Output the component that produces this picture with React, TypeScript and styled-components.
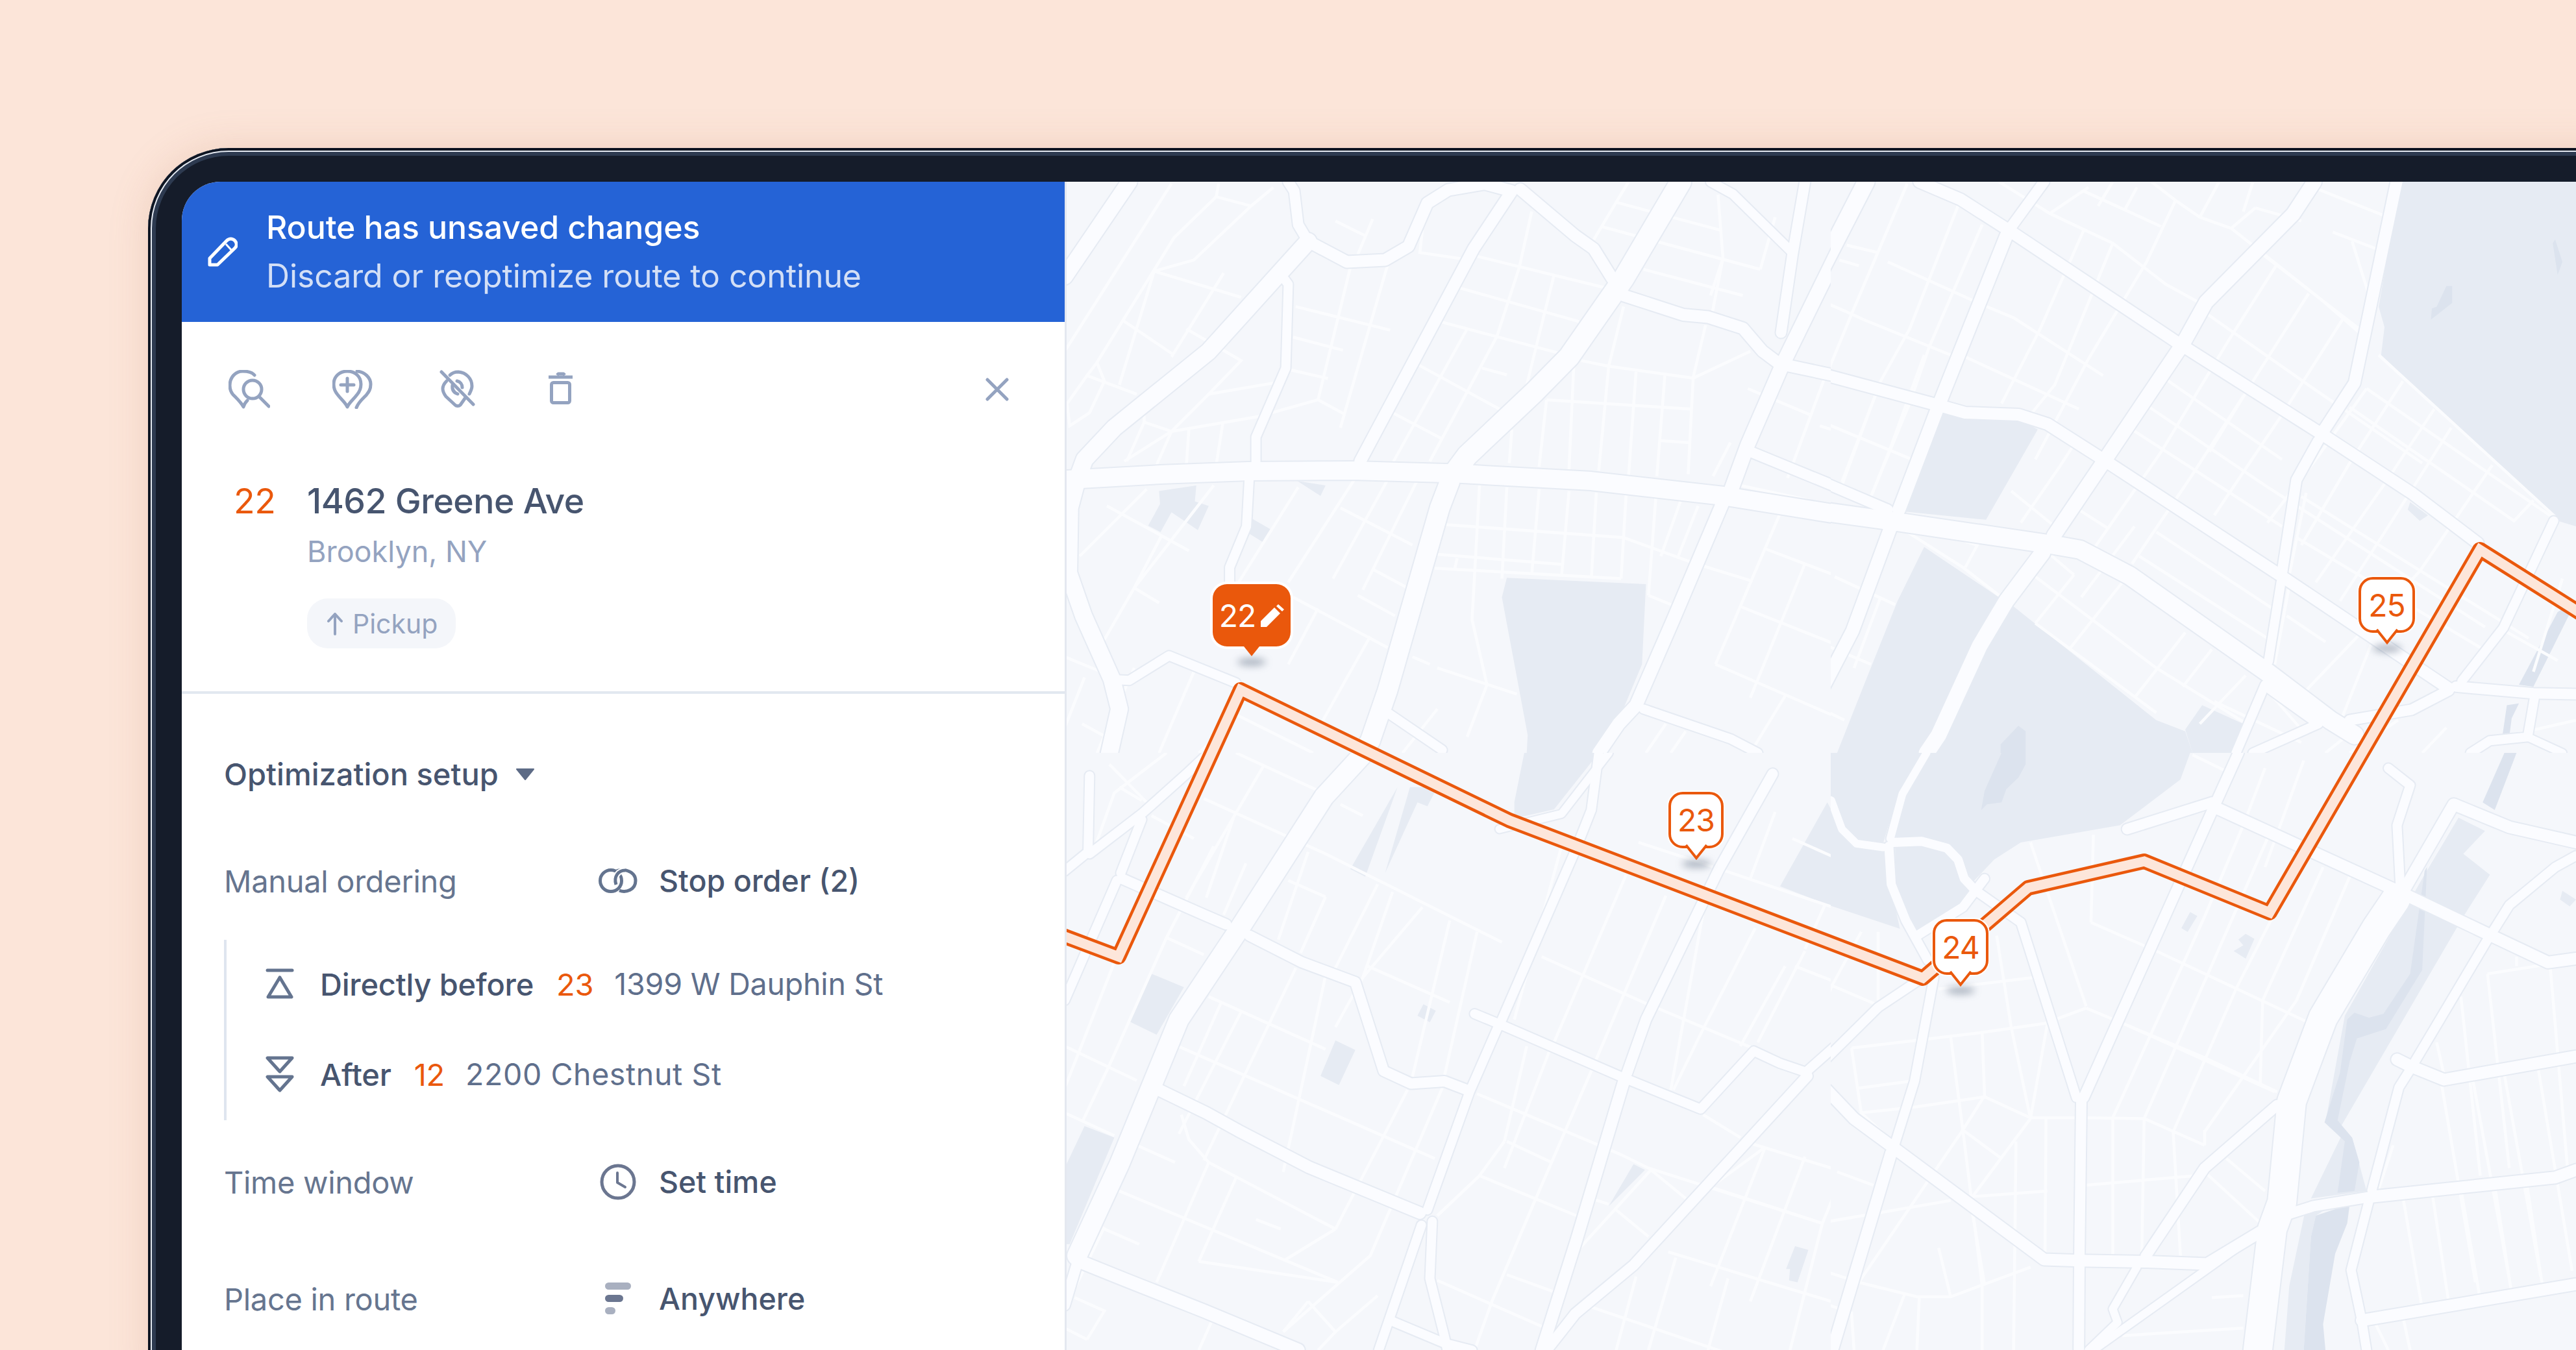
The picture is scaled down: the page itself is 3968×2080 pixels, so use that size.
import React from "react";
import styled, { createGlobalStyle } from "styled-components";

const ORANGE = "#ea580c";

const GlobalStyle = createGlobalStyle`
  html, body {
    margin: 0;
    padding: 0;
    background: #fce5d9;
    font-family: Inter, "Noto Sans", "Liberation Sans", sans-serif;
  }
`;

const Page = styled.div`
  width: 3968px;
  height: 2080px;
  padding: 228px 0 0 228px;
  box-sizing: border-box;
  overflow: hidden;
  background: #fce5d9;
`;

const Frame = styled.div`
  width: 3800px;
  height: 1900px;
  padding: 52px 0 0 52px;
  box-sizing: border-box;
  background: #151c2a;
  border-radius: 124px 0 0 0;
  box-shadow: 0 0 60px rgba(190, 130, 100, 0.22), inset 0 0 0 4px #0e1522,
    inset 0 0 0 6px #e4e9f1, inset 0 0 0 12px #2d3a50;
`;

const Screen = styled.div`
  display: flex;
  width: 3688px;
  height: 1800px;
  overflow: hidden;
  border-radius: 60px 0 0 0;
`;

const Panel = styled.aside`
  flex: 0 0 1363px;
  box-sizing: border-box;
  background: #fff;
  border-right: 3px solid #e4e8f0;
`;

const Banner = styled.div`
  display: flex;
  align-items: center;
  gap: 44px;
  height: 216px;
  padding-left: 40px;
  background: #2563d6;
`;

const BannerLines = styled.div`
  display: flex;
  flex-direction: column;
  letter-spacing: -0.1px;
`;

const BannerTitle = styled.div`
  font-size: 50px;
  line-height: 75px;
  font-weight: 500;
  color: #fff;
`;

const BannerText = styled.div`
  font-size: 50px;
  line-height: 75px;
  font-weight: 400;
  color: #d3dff6;
`;

const Toolbar = styled.div`
  display: flex;
  align-items: center;
  height: 208px;
  padding: 0 86px 0 72px;
`;

const ToolIcon = styled.svg<{ $last?: boolean }>`
  display: block;
  width: 64px;
  height: 60px;
  margin-right: ${(p) => (p.$last ? 0 : 96)}px;
  fill: none;
  stroke: #94a3c0;
  stroke-width: 5;
  stroke-linecap: round;
  stroke-linejoin: round;
`;

const CloseIcon = styled.svg`
  display: block;
  width: 36px;
  height: 36px;
  margin-left: auto;
  fill: none;
  stroke: #94a3c0;
  stroke-width: 5;
  stroke-linecap: round;
`;

const Stop = styled.div`
  padding: 34px 0 66px 80px;
  border-bottom: 4px solid #e2e8f0;
`;

const StopHead = styled.div`
  display: flex;
  font-size: 53.5px;
  line-height: 68px;
  font-weight: 500;
  letter-spacing: -0.5px;
  color: #47556f;
`;

const StopNumber = styled.span`
  width: 113px;
  font-weight: 400;
  color: ${ORANGE};
`;

const StopCity = styled.div`
  margin: 10px 0 0 113px;
  font-size: 45px;
  line-height: 68px;
  color: #94a3c0;
`;

const Pill = styled.div`
  display: inline-flex;
  align-items: center;
  gap: 14px;
  height: 77px;
  margin: 38px 0 0 113px;
  padding: 0 28px 0 30px;
  box-sizing: border-box;
  border-radius: 32px;
  background: #f4f6fa;
  font-size: 41px;
  color: #94a3c0;
`;

const Setup = styled.section`
  padding: 94px 0 0 65px;
`;

const SetupTitle = styled.div`
  display: flex;
  align-items: center;
  gap: 26px;
  font-size: 47px;
  line-height: 60px;
  font-weight: 500;
  color: #47556f;
`;

const Row = styled.div<{ $top: number }>`
  display: flex;
  align-items: center;
  height: 60px;
  margin-top: ${(p) => p.$top}px;
`;

const RowLabel = styled.div`
  width: 577px;
  font-size: 47px;
  letter-spacing: -0.3px;
  color: #66758f;
`;

const RowIcon = styled.div`
  display: flex;
  justify-content: center;
  width: 60px;
  margin-right: 33px;
`;

const RowValue = styled.div`
  font-size: 46.5px;
  font-weight: 500;
  color: #47556f;
`;

const Ordering = styled.div`
  display: flex;
  flex-direction: column;
  gap: 79px;
  height: 278px;
  margin-top: 61px;
  padding: 38px 0 0 60px;
  box-sizing: border-box;
  border-left: 4px solid #dfe5ef;
`;

const OrderItem = styled.div`
  display: flex;
  align-items: center;
  height: 60px;
  font-size: 47px;
  letter-spacing: -0.2px;
`;

const OrderIcon = styled.div`
  flex: 0 0 44px;
  margin-right: 40px;
  display: flex;
`;

const OrderKind = styled.span`
  font-weight: 500;
  color: #47556f;
`;

const OrderNumber = styled.span`
  margin: 0 32px 0 35px;
  color: ${ORANGE};
`;

const OrderAddress = styled.span<{ $spacing: number }>`
  font-size: 46.5px;
  letter-spacing: ${(p) => p.$spacing}px;
  color: #5f6f8c;
`;

const MapPane = styled.div`
  position: relative;
  flex: 1;
  overflow: hidden;
  background: #f5f7fb;
`;

const MapDrawing = styled.svg`
  display: block;
  width: 100%;
  height: 100%;
`;

const PinBox = styled.div<{ $x: number; $y: number; $w: number; $h: number }>`
  position: absolute;
  left: ${(p) => p.$x - 1643}px;
  top: ${(p) => p.$y - 280}px;
  width: ${(p) => p.$w}px;
  height: ${(p) => p.$h}px;
`;

const PinBubble = styled.div<{ $solid?: boolean }>`
  position: relative;
  z-index: 1;
  display: flex;
  align-items: center;
  justify-content: center;
  gap: 8px;
  height: 100%;
  box-sizing: border-box;
  font-size: 48px;
  letter-spacing: -1px;
  border-radius: 22px;
  color: ${(p) => (p.$solid ? "#fff" : ORANGE)};
  background: ${(p) => (p.$solid ? ORANGE : "#fff")};
  border: ${(p) => (p.$solid ? "none" : `4px solid ${ORANGE}`)};
  box-shadow: 0 0 0 ${(p) => (p.$solid ? 4 : 2)}px #fff;
`;

const PinTail = styled.svg`
  position: absolute;
  z-index: 2;
  left: 50%;
  top: 100%;
  width: 36px;
  height: 22px;
  margin: -5px 0 0 -18px;
  overflow: visible;
`;

const PinShadow = styled.div`
  position: absolute;
  left: 50%;
  top: 100%;
  width: 44px;
  height: 12px;
  margin: 18px 0 0 -22px;
  border-radius: 50%;
  background: rgba(70, 85, 110, 0.42);
  filter: blur(6px);
`;

type Road = [number, string];
type Quad = {
  ox: number;
  oy: number;
  sx: number;
  sy: number;
  clip: [number, number, number, number];
  parks: string[];
  water: string[];
  streets: string[];
  roads: Road[];
};

const QUADS: Quad[] = [
  {
    ox: 1640, oy: 260, sx: 1.3067, sy: 1.742,
    clip: [1640, 280, 2820, 1160],
    parks: [
      "190,865 265,850 262,893 290,905 268,970 215,922 193,975 168,958 192,900",
      "378,940 415,968 400,1003 372,980",
      "890,1098 1170,1115 1162,1330 1115,1480 1075,1568 930,1568 932,1520 880,1150",
      "468,838 525,850 515,878",
    ],
    water: [],
    streets: [
      "215,40 0,490", "310,40 305,75 220,185 65,520 45,555 5,630 10,690 50,655 80,570 65,520",
      "305,75 375,100", "420,50 375,100 260,245 180,275 110,580", "180,275 355,345", "115,405 220,500",
      "320,280 215,505", "245,430 355,515 290,605 215,705 120,785", "45,555 145,605", "290,605 420,575",
      "215,705 390,665 510,620 565,660", "160,650 160,680 125,785", "160,680 215,705", "250,700 245,795",
      "318,685 305,795", "215,705 185,795", "465,370 655,433", "460,452 560,487", "455,540 530,563",
      "650,258 555,695", "575,265 510,620", "545,140 605,180", "620,135 590,230", "720,165 715,225 815,245",
      "830,235 1090,320", "795,320 1035,410", "755,410 995,495", "985,285 930,580", "940,115 915,265 870,450 735,785",
      "810,430 660,790", "710,525 875,645", "660,655 760,725", "840,535 890,553", "900,700 895,790",
      "1125,370 1095,530 1075,810", "970,620 1260,645", "1040,515 1095,530 1265,562 1380,490", "1265,562 1255,820",
      "1150,545 1135,825", "1208,555 1192,825", "1025,520 1015,810", "970,620 955,800", "1200,730 1258,735",
      "1290,420 1265,560", "1315,70 1325,240 1300,340", "1065,190 1110,90 1135,35", "1110,90 1320,165",
      "1080,155 1400,270", "1400,270 1430,130", "1325,240 1300,410", "1165,270 1365,340",
      "835,850 825,1090 820,1210 850,1385", "890,855 880,1100", "955,860 940,1090", "1015,865 1000,1095",
      "1070,870 1060,1100", "1130,875 1120,1100", "1190,880 1175,1145", "765,955 1125,990 1270,1060 1380,1105",
      "750,1035 1000,1062", "745,1072 1120,1100", "790,1045 785,1075", "165,860 30,1040", "85,905 250,1025",
      "300,850 140,1125 60,1310", "140,1125 190,1165", "195,985 140,1125", "470,855 350,1110", "555,910 700,1010",
      "585,830 450,1110", "650,835 540,1100", "710,835 600,1130", "620,1075 690,1125", "590,1145 665,1200",
      "460,1150 650,1285", "510,1180 450,1330", "615,1255 520,1480", "750,1340 910,1410", "700,1310 735,1330",
      "850,1385 810,1525", "1175,1145 1230,1175", "1360,1175 1568,1285", "1410,1020 1568,1100",
      "1490,1060 1380,1420", "1310,1330 1568,1480", "1450,1415 1380,1568", "1440,925 1310,1330",
      "1240,890 1200,1040", "1275,905 1235,1040", "1360,850 1500,890", "1530,560 1455,830", "1375,590 1500,660",
      "1340,735 1305,825", "1520,690 1568,710", "750,1450 680,1568", "0,1310 110,1370", "40,1365 0,1500", "35,1490 90,1530",
      "340,1480 270,1568", "260,1350 190,1568", "345,1465 500,1568", "140,1340 65,1568", "1210,1490 1170,1568", "1250,1510 1220,1568",
    ],
    roads: [
      [24, "130,35 0,290"],
      [26, "490,195 290,490 100,695 40,780 25,835 10,910 8,1085 38,1200 95,1370 110,1450 90,1568"],
      [16, "450,35 462,60 470,150 490,195"],
      [18, "490,195 568,250 645,245 692,208 730,92 772,57 845,40 900,60 823,215 595,785"],
      [18, "917,55 1028,180 1065,215 1100,290 1115,320"],
      [32, "1240,35 1125,295 1015,505 945,600 810,770 785,815"],
      [30, "775,840 755,910 650,1400 615,1535 600,1568"],
      [28, "0,835 200,820 370,812 580,810 790,818 1060,838 1325,878 1568,930"],
      [14, "372,815 366,960 332,1070 332,1120"],
      [14, "385,800 385,720 445,535 450,310 440,292"],
      [14, "110,1372 130,1373 210,1307 345,1380"],
      [18, "1125,340 1245,392 1295,398 1365,428 1405,490 1440,525"],
      [16, "1442,440 1465,230 1490,35"],
      [14, "1465,225 1345,68 1300,35"],
      [22, "1568,190 1445,525 1375,740 1342,860"],
      [18, "1445,525 1568,560"],
      [16, "1385,762 1568,862"],
      [20, "1325,895 1225,1210 1150,1440 1115,1490 1075,1568"],
      [14, "1165,1450 1340,1530 1395,1568"],
      [14, "650,1460 760,1560"],
    ],
  },
  {
    ox: 2800, oy: 260, sx: 1.3425, sy: 1.742,
    clip: [2820, 280, 3968, 1160],
    parks: [
      "1205,35 1568,35 1568,960 1530,945 1165,500 1172,425 1160,370",
      "258,650 305,668 415,670 455,700 348,942 177,920",
      "220,1015 380,1155 325,1280 245,1510 210,1568 40,1568 85,1420 165,1160",
      "400,1170 700,1480 760,1510 775,1568 225,1568 255,1530 345,1280",
      "795,1440 880,1490 860,1568 775,1568 760,1505",
      "1225,895 1262,930 1245,945 1220,915",
    ],
    water: [
      "1525,190 1540,250 1530,285 1520,200",
      "1300,315 1312,315 1312,360 1268,405 1270,375 1280,370",
      "415,1495 430,1510 430,1568 378,1568 378,1545",
      "1530,1190 1568,1160 1480,1390 1450,1385",
      "1425,1440 1450,1435 1435,1475 1430,1525 1415,1530",
    ],
    streets: [
      "185,40 70,390 0,610", "60,205 125,225", "45,245 85,260", "145,250 340,365 405,400 590,555", "95,405 275,500",
      "305,505 540,645", "0,675 195,780", "0,350 70,390 95,405", "290,100 190,430 130,570 50,850",
      "340,150 230,480 190,630 110,880", "375,35 480,120 610,200 720,310 790,360", "550,60 710,155", "480,120 560,50",
      "790,130 855,160 1040,350 1120,440", "905,105 1000,140", "855,160 905,105", "580,100 610,35", "635,110 660,50",
      "740,85 690,35", "740,85 790,130", "790,130 830,35", "880,115 900,35", "550,165 460,430 380,630",
      "610,200 490,580 440,660", "740,85 680,250 560,510 450,780", "948,260 850,460 710,760 560,1040",
      "1085,405 955,670 820,930", "1065,170 1155,215", "1035,55 1170,125", "1105,195 1140,340", "1015,335 900,570 810,760",
      "920,230 1140,450", "800,385 1025,590 1250,790", "650,700 960,960", "700,975 940,1180", "665,1040 930,1260",
      "680,635 925,850 1380,1230", "720,565 960,780", "880,610 770,830 650,1060", "400,865 490,960", "540,915 600,965",
      "420,950 500,800 530,740", "545,1150 655,960", "445,1090 700,1340 900,1500", "530,1090 450,1220", "630,1110 520,1290",
      "480,1035 530,1090", "450,1220 700,1460", "760,1245 655,1420", "815,1290 755,1390", "885,1360 790,1490",
      "1135,590 1030,780 930,950", "1210,570 1100,790 1000,1010", "1275,645 1170,850 1030,1110", "1310,695 1170,980 1080,1160",
      "1395,795 1245,1080 1010,1400", "1480,890 1440,945 1100,640", "1135,590 1530,945", "1160,500 1530,940",
      "1000,880 1470,1260", "990,990 1370,1285", "970,1200 1050,1270", "1010,870 975,1090", "975,1120 945,1330",
      "1145,1275 1085,1470", "0,1270 110,1330", "0,1445 55,1480", "35,1095 160,1170", "120,605 50,840",
      "220,500 150,750 110,880", "305,1000 330,1010 305,1070", "185,975 300,1070 380,1150", "130,1150 75,1340", "1530,1320 1420,1240",
      "1540,1100 1480,1350", "820,1430 1000,1540", "1000,1505 930,1400", "1115,1500 1050,1568", "1200,1480 1100,1568", "1300,1500 1250,1568", "1400,1530 1568,1480",
    ],
    roads: [
      [26, "100,35 -5,300"],
      [18, "210,35 295,82 395,165 742,465 1042,712 1230,872 1365,1005"],
      [16, "468,35 395,165"],
      [20, "390,180 250,635 168,915"],
      [20, "150,965 72,1240 0,1420"],
      [18, "0,548 250,635 305,655 415,660 475,685 590,780 955,1090 1305,1395"],
      [22, "1027,35 983,122 803,358 755,470 592,785 488,985"],
      [24, "465,1030 390,1160 335,1280 250,1520 225,1568"],
      [28, "0,918 150,945 480,1008 542,1022 645,1092 930,1352 1060,1480 1110,1520"],
      [16, "0,835 145,915"],
      [18, "1197,35 1110,575 1045,705"],
      [16, "1035,730 990,835 960,1085"],
      [14, "958,1110 932,1322"],
      [14, "925,1385 865,1568"],
      [16, "1320,1390 1480,1408 1568,1410"],
      [16, "1305,1400 1228,1452 1100,1480"],
      [14, "1522,945 1418,1232 1332,1375"],
      [14, "1482,1420 1468,1525 1390,1535 1350,1568"],
      [12, "1468,1525 1540,1568"],
      [14, "935,1397 1035,1490 900,1568"],
    ],
  },
  {
    ox: 1640, oy: 1160, sx: 1.3067, sy: 1.704,
    clip: [1640, 1160, 2820, 2080],
    parks: [
      "925,0 1075,0 985,148 905,172 905,130",
      "1440,350 1535,130 1568,210 1568,415",
      "0,1290 10,1290 100,1010 40,980 0,1090",
      "130,705 175,580 240,615 185,740",
      "575,305 670,90 605,325",
      "645,315 695,90 750,90 730,140 710,130",
      "710,690 722,660 747,677 735,707",
      "515,848 545,755 585,780 552,872",
      "1145,1080 1168,1095 1095,1190",
      "1470,1295 1497,1305 1475,1390 1458,1385 1460,1355 1452,1355",
    ],
    water: [],
    streets: [
      "110,90 155,125", "205,0 100,105 60,250", "90,30 165,130", "280,120 525,265 880,497", "345,0 520,105", "555,135 600,165",
      "400,35 245,380", "340,170 285,380", "175,165 260,225", "300,245 205,485 90,820 35,970", "205,485 280,530",
      "365,290 320,425", "450,335 525,378", "525,378 475,525", "490,260 430,490", "630,345 535,590", "660,365 600,590",
      "720,405 600,590 545,720", "775,440 700,850", "830,470 765,845", "610,560 775,655", "960,535 1165,655 1385,775",
      "1000,245 905,700", "1130,320 985,760", "1210,375 1060,835", "1285,420 1220,885", "1390,460 1285,725 1225,885",
      "1155,235 1330,310 1568,415", "1380,330 1430,155", "1465,225 1568,285", "290,640 525,778", "315,655 240,875",
      "355,680 230,1000", "465,565 280,1070", "525,585 440,1100", "228,770 745,1065", "145,1030 222,1075",
      "235,950 250,1015 290,1075 545,1250", "100,1145 550,1390", "80,1250 150,1290", "270,1335 550,1390", "345,1115 270,1335",
      "290,1075 185,1390", "385,1225 435,1250", "545,1250 445,1330", "760,880 615,1320 440,1520", "690,885 545,1250",
      "835,1110 1030,1215", "890,1020 980,1075", "885,1020 835,1110 750,1215", "930,770 885,1020", "1060,835 945,1180 860,1440 825,1568",
      "975,785 885,1090", "830,895 1120,1055 1175,1090 1525,1235", "1180,1095 1250,1170", "1110,1200 1175,1270",
      "1180,1095 1030,1310", "1060,1170 1095,1185", "1285,950 1360,1010", "1380,1025 1568,1100", "1410,1035 1300,1400",
      "1490,1060 1380,1440", "1525,1235 1568,1100", "1300,1140 1525,1235", "1525,1235 1460,1568", "1215,1310 1568,1450",
      "890,1370 985,1415", "750,1385 985,1520", "1060,1455 1568,1680", "300,1480 270,1568", "20,1430 80,1465 45,1540",
      "0,1510 45,1540", "490,1440 545,1520 510,1568", "545,1520 630,1425", "490,1440 440,1520", "1150,1375 1110,1568",
      "1230,1325 1175,1568", "1335,1380 1295,1568", "0,770 145,860", "0,945 100,1005", "125,1030 60,1270", "80,1245 0,1460",
      "140,490 100,550 0,880", "1410,1035 1300,1140", "1360,770 1450,560", "1470,560 1568,610", "1490,520 1395,760", "1530,400 1490,515",
    ],
    roads: [
      [30, "603,0 522,115 350,465 230,700 110,1080 25,1320"],
      [20, "30,1335 125,1385 280,1465 470,1568"],
      [16, "25,1340 0,1450"],
      [14, "50,60 47,260 0,310"],
      [14, "50,265 155,160 245,55 290,0"],
      [14, "113,315 155,175"],
      [14, "105,335 0,650"],
      [16, "115,330 280,425 325,450"],
      [16, "372,480 478,550 585,602 642,835 697,868 764,862 810,885"],
      [16, "1425,55 1317,305 1170,700 1132,840"],
      [18, "1125,865 1030,1280 960,1568"],
      [16, "1495,848 1145,1345 1028,1472 970,1568"],
      [14, "825,685 875,712 1125,853 1280,935 1387,783 1440,815 1492,838 1568,750"],
      [14, "880,700 990,370 1025,265 1060,150 1075,0"],
      [14, "872,720 815,890 730,1200"],
      [14, "740,1230 735,1380 765,1535 770,1568"],
      [14, "718,1240 632,1568"],
      [14, "655,1490 765,1550 820,1568"],
      [18, "190,885 285,945 350,992 492,1088 715,1208"],
      [12, "875,200 1000,160 1095,0"],
    ],
  },
  {
    ox: 2800, oy: 1160, sx: 1.3425, sy: 1.704,
    clip: [2820, 1160, 3968, 2080],
    parks: [
      "40,0 215,0 170,105 145,195 135,238 80,230 50,200 25,120 0,100 0,0",
      "235,0 770,0 750,70 625,190 420,235 365,280 320,340 298,280 270,240 215,222 160,225 185,110",
      "0,390 170,462 150,345 137,258 75,250 45,212 15,125 0,115",
      "210,470 290,400 318,368 295,335 283,285 262,260 215,243 160,245 160,345 190,445",
      "1380,205 1335,265 1390,320 1335,430 1080,985 1105,1010 1135,1150 1020,1170 1085,1000 1050,970 1090,690 1250,330 1325,170",
      "1010,1190 975,1400 965,1568 1005,1568 1020,1270 1030,1215 1060,1190",
      "770,418 785,428 765,470 752,460",
      "885,475 903,488 885,540 860,520 880,505 870,490",
      "1540,362 1568,385 1555,403 1535,385",
    ],
    water: [
      "380,0 430,0 430,30 415,65 390,95 380,130 350,135 338,150 345,100",
      "1320,170 1260,300 1250,570 1175,725 1115,750 1100,810 1075,965 1105,1010 1120,1075 1110,1150 1075,1155 1090,1020 1048,970 1080,840 1095,700 1110,682 1140,695 1170,685 1225,580 1255,310",
      "1020,1270 1030,1215 1100,1185 1095,1235 1070,1315 1045,1500 1050,1568 1005,1568",
      "1420,0 1445,0 1400,150 1375,130",
    ],
    streets: [
      "440,235 555,665", "570,215 565,445", "565,445 700,520 1010,705", "555,670 470,710 335,735 70,775", "445,590 250,620",
      "555,670 800,800 950,890", "370,480 400,720 440,960 475,710", "340,735 345,900 300,990 380,1065", "275,745 300,990 340,1400 340,1568",
      "200,930 345,903 440,958 535,958", "85,880 190,862", "90,945 200,930", "70,775 90,945 150,1015", "440,960 320,1165 475,1150",
      "555,1135 780,1110", "610,958 610,1320", "555,958 675,960", "675,960 670,1320", "675,960 800,1030", "735,995 750,1320",
      "410,1020 405,1568", "472,960 470,1310", "800,990 800,1030", "800,1100 920,1240", "845,1065 925,1150", "300,990 85,1390 0,1355",
      "85,1390 205,1428 275,1428 440,1350", "0,1235 275,1175", "250,1300 275,1428", "180,1420 135,1568", "210,1430 205,1568",
      "320,1210 345,1395", "0,1440 70,1470 75,1568", "40,1100 115,1135", "1290,870 1360,1390", "1355,860 1430,1380", "1420,845 1495,1375",
      "1490,830 1560,1360", "1210,1165 1250,1460", "1270,1150 1305,1445", "1330,1145 1370,1435", "1400,1135 1435,1420", "1465,1120 1500,1410",
      "1150,1490 1180,1568", "1210,1480 1225,1568", "1190,1030 1160,1145", "880,190 800,430 610,958", "930,225 800,600 675,960",
      "1005,270 865,620 735,995", "1100,325 990,650 800,995", "1045,300 920,650 915,870", "1385,580 1510,555", "1385,580 1430,1090",
      "1515,565 1550,1085", "1330,640 1370,1110", "1280,760 1295,845", "640,715 945,890", "775,5 840,45", "875,0 850,85",
      "925,40 880,190", "1005,20 925,300", "1445,535 1445,560", "0,595 120,660", "125,470 125,650", "30,610 0,700", "90,470 30,610", "815,1430 880,1425", "630,1530 880,1510",
    ],
    roads: [
      [12, "0,110 28,125 50,200 80,238 135,248"],
      [12, "150,225 175,108 225,0"],
      [14, "147,245 152,345 182,440 228,545"],
      [14, "155,235 215,232 267,250 290,280 303,330 325,360 420,445 535,905"],
      [14, "205,480 300,405 345,330"],
      [14, "0,825 125,668 235,575"],
      [14, "240,590 200,862 160,1025"],
      [18, "0,860 75,960 150,1030 468,1330 540,1333 680,1336 805,1342 925,1250"],
      [18, "152,1050 30,1568"],
      [16, "545,915 541,1333 540,1568"],
      [16, "550,905 820,140 870,0"],
      [16, "640,200 815,130"],
      [18, "825,145 1195,360 1385,475 1510,550 1568,540"],
      [44, "1195,385 1155,460 1045,695 980,915 960,1180 940,1250 910,1568"],
      [14, "1205,360 1198,190 1225,85 1180,40"],
      [18, "1208,370 1315,135 1430,195 1568,235"],
      [14, "1397,467 1430,400 1525,300 1568,270"],
      [14, "1385,490 1235,810"],
      [18, "1198,805 1225,822 1295,858 1568,797"],
      [14, "1222,838 1202,878 1146,1148"],
      [18, "1146,1165 1525,1115 1568,1095"],
      [16, "975,1210 1025,1190 1146,1165"],
      [14, "1140,1175 1103,1358 1125,1490 1135,1568"],
      [18, "1125,1490 1568,1395"],
      [16, "678,1322 800,1090 950,925"],
      [12, "660,1350 610,1460 620,1495 560,1568"],
      [12, "905,1265 570,1568"],
    ],
  },
];

const ROUTE = "1630,1439 1723,1474 1911,1063 2325,1264 2962,1507 3124,1368 3303,1327 3496,1406 3820,847 3980,948";

const toPoints = (q: Quad, s: string) =>
  s
    .split(" ")
    .map((p) => {
      const [x, y] = p.split(",").map(Number);
      return `${(q.ox + x / q.sx).toFixed(1)},${(q.oy + y / q.sy).toFixed(1)}`;
    })
    .join(" ");

const CityMap = () => (
  <MapDrawing viewBox="1643 280 2325 1800">
    <defs>
      {QUADS.map((q, i) => (
        <clipPath id={`quad${i}`} key={i}>
          <rect x={q.clip[0]} y={q.clip[1]} width={q.clip[2] - q.clip[0]} height={q.clip[3] - q.clip[1]} />
        </clipPath>
      ))}
    </defs>
    {QUADS.map((q, i) => (
      <g key={i} clipPath={`url(#quad${i})`}>
        {q.parks.map((s) => (
          <polygon key={s} points={toPoints(q, s)} fill="#e6ebf3" />
        ))}
        {q.water.map((s) => (
          <polygon key={s} points={toPoints(q, s)} fill="#dce3ee" />
        ))}
        {q.streets.map((s) => (
          <polyline key={s} points={toPoints(q, s)} fill="none" stroke="#fbfcfe" strokeWidth={4.5} />
        ))}
      </g>
    ))}
    {QUADS.map((q, i) => (
      <g key={i} clipPath={`url(#quad${i})`} fill="none" strokeLinejoin="round" strokeLinecap="round">
        {q.roads.map(([w, s]) => (
          <polyline key={s} points={toPoints(q, s)} stroke="#e6ebf3" strokeWidth={w + 4} />
        ))}
      </g>
    ))}
    {QUADS.map((q, i) => (
      <g key={i} clipPath={`url(#quad${i})`} fill="none" strokeLinejoin="round" strokeLinecap="round">
        {q.roads.map(([w, s]) => (
          <polyline key={s} points={toPoints(q, s)} stroke="#fbfcff" strokeWidth={w} />
        ))}
      </g>
    ))}
    <polyline points={ROUTE} fill="none" stroke={ORANGE} strokeWidth={24} strokeLinejoin="round" />
    <polyline points={ROUTE} fill="none" stroke="#fde6da" strokeWidth={15} strokeLinejoin="miter" />
  </MapDrawing>
);

type PinProps = { x: number; y: number; w: number; h: number; solid?: boolean; children: React.ReactNode };

const Pin = ({ x, y, w, h, solid, children }: PinProps) => (
  <PinBox $x={x} $y={y} $w={w} $h={h}>
    <PinShadow />
    <PinBubble $solid={solid}>{children}</PinBubble>
    <PinTail viewBox="0 0 36 22">
      <path
        d="M2 0 L18 20 L34 0"
        fill={solid ? ORANGE : "#fff"}
        stroke={solid ? "#fff" : ORANGE}
        strokeWidth={solid ? 0 : 4}
      />
    </PinTail>
  </PinBox>
);

const App = () => (
  <Page>
    <GlobalStyle />
    <Frame>
      <Screen>
        <Panel>
          <Banner>
            <svg width="46" height="46" viewBox="0 0 46 46" fill="none" stroke="#fff" strokeWidth="5" strokeLinejoin="round">
              <path d="M3 43 V33 L29 6 C33 2 38 2 42 6 C45 10 45 14 42 17 L15 43 Z" />
              <path d="M28 11 L37 21" strokeWidth="3" />
            </svg>
            <BannerLines>
              <BannerTitle>Route has unsaved changes</BannerTitle>
              <BannerText>Discard or reoptimize route to continue</BannerText>
            </BannerLines>
          </Banner>
          <Toolbar>
            <ToolIcon viewBox="0 0 64 60">
              <path d="M40 8 C36 3 29 2 22 2 C10 2 2 12 2 24 C2 32 5 37 10 41 C16 47 20 51 23 57 C24 53 26 50 29 47" />
              <circle cx="37" cy="30" r="14" />
              <path d="M48 42 L62 56" />
            </ToolIcon>
            <ToolIcon viewBox="0 0 64 60">
              <path d="M23 57 C20 50 14 46 8 38 C3 32 2 28 2 22 C2 10 11 2 23 2 C35 2 44 10 44 22 C44 28 43 32 38 38 C32 46 26 50 23 57Z" />
              <path d="M13 23 H33 M23 13 V33" />
              <path d="M38 2 C50 3 59 12 59 22 C59 30 56 34 52 39 C46 45 40 50 37 58" />
            </ToolIcon>
            <ToolIcon viewBox="-6 0 64 60">
              <path d="M2 3 L51 53" />
              <path d="M15 8 C19 4 24 3 28 3 C40 4 49 13 49 25 C49 29 47 33 45 37" />
              <path d="M10 17 C6 21 4 25 4 29 C4 33 6 37 9 41 L23 54 C25 56 29 56 31 54 L38 44" />
              <path d="M26 17 C31 18 34 22 34 27" />
              <path d="M19 23 C18 30 21 35 27 37" />
            </ToolIcon>
            <ToolIcon viewBox="0 0 64 60" $last>
              <path d="M13 11 H50" strokeLinecap="butt" />
              <path d="M26 8 L28 6 H36 L38 8" strokeLinecap="butt" />
              <rect x="17.5" y="19.5" width="28" height="31" rx="3" strokeLinecap="butt" />
            </ToolIcon>
            <CloseIcon viewBox="0 0 36 36">
              <path d="M3 3 L33 33 M33 3 L3 33" />
            </CloseIcon>
          </Toolbar>
          <Stop>
            <StopHead>
              <StopNumber>22</StopNumber>
              1462 Greene Ave
            </StopHead>
            <StopCity>Brooklyn, NY</StopCity>
            <Pill>
              <svg width="26" height="36" viewBox="0 0 26 36" fill="none" stroke="#94a3c0" strokeWidth="4" strokeLinecap="round" strokeLinejoin="round">
                <path d="M13 34 V3 M3 14 L13 3 L23 14" />
              </svg>
              Pickup
            </Pill>
          </Stop>
          <Setup>
            <SetupTitle>
              Optimization setup
              <svg width="30" height="18" viewBox="0 0 30 18">
                <path d="M2 1 H28 L15 17 Z" fill="#5d6b86" stroke="#5d6b86" strokeWidth="2" strokeLinejoin="round" />
              </svg>
            </SetupTitle>
            <Row $top={104}>
              <RowLabel>Manual ordering</RowLabel>
              <RowIcon>
                <svg width="60" height="38" viewBox="0 0 60 38" fill="none" stroke="#64748f" strokeWidth="5">
                  <circle cx="19" cy="19" r="16.5" />
                  <path d="M26 5 C35 -1 57 3 57 19 C57 33 42 38 32 34" />
                  <path d="M27 22 C24 13 30 3 41 3" stroke="#fff" strokeWidth="9" />
                  <path d="M27 25 C23 13 30 3 41 3" />
                </svg>
              </RowIcon>
              <RowValue>Stop order (2)</RowValue>
            </Row>
            <Ordering>
              <OrderItem>
                <OrderIcon>
                  <svg width="44" height="48" viewBox="0 0 44 48" fill="none" stroke="#64748f" strokeWidth="5" strokeLinecap="round" strokeLinejoin="round">
                    <path d="M3 3 H41" />
                    <path d="M22 14 L40 44 H4 Z" />
                  </svg>
                </OrderIcon>
                <OrderKind>Directly before</OrderKind>
                <OrderNumber>23</OrderNumber>
                <OrderAddress $spacing={-0.2}>1399 W Dauphin St</OrderAddress>
              </OrderItem>
              <OrderItem>
                <OrderIcon>
                  <svg width="44" height="56" viewBox="0 0 44 56" fill="none" stroke="#64748f" strokeWidth="5" strokeLinecap="round" strokeLinejoin="round">
                    <path d="M3 3 H41 L22 24 Z" />
                    <path d="M3 32 H41 L22 53 Z" />
                  </svg>
                </OrderIcon>
                <OrderKind>After</OrderKind>
                <OrderNumber>12</OrderNumber>
                <OrderAddress $spacing={0.6}>2200 Chestnut St</OrderAddress>
              </OrderItem>
            </Ordering>
            <Row $top={65}>
              <RowLabel>Time window</RowLabel>
              <RowIcon>
                <svg width="56" height="56" viewBox="0 0 56 56" fill="none" stroke="#6b7690" strokeWidth="5" strokeLinecap="round" strokeLinejoin="round">
                  <circle cx="28" cy="28" r="25" />
                  <path d="M27 14 V29 L39 36" strokeWidth="4" />
                </svg>
              </RowIcon>
              <RowValue>Set time</RowValue>
            </Row>
            <Row $top={120}>
              <RowLabel>Place in route</RowLabel>
              <RowIcon>
                <svg width="40" height="50" viewBox="0 0 40 50">
                  <rect width="40" height="11" rx="5.5" fill="#a9b0c0" />
                  <rect y="19" width="28" height="11" rx="5.5" fill="#6b7690" />
                  <rect y="38" width="16" height="11" rx="5.5" fill="#a9b0c0" />
                </svg>
              </RowIcon>
              <RowValue>Anywhere</RowValue>
            </Row>
          </Setup>
        </Panel>
        <MapPane>
          <CityMap />
          <Pin x={1868} y={900} w={120} h={96} solid>
            22
            <svg width="36" height="36" viewBox="0 0 36 36" fill="#fff">
              <path d="M0 36 V27 L21 6 L30 15 L9 36 Z" />
              <path d="M24 4 L27 1 L36 9 L33 12 Z" />
            </svg>
          </Pin>
          <Pin x={3633} y={889} w={87} h={86}>25</Pin>
          <Pin x={2570} y={1220} w={85} h={87}>23</Pin>
          <Pin x={2977} y={1416} w={86} h={86}>24</Pin>
        </MapPane>
      </Screen>
    </Frame>
  </Page>
);

export default App;
